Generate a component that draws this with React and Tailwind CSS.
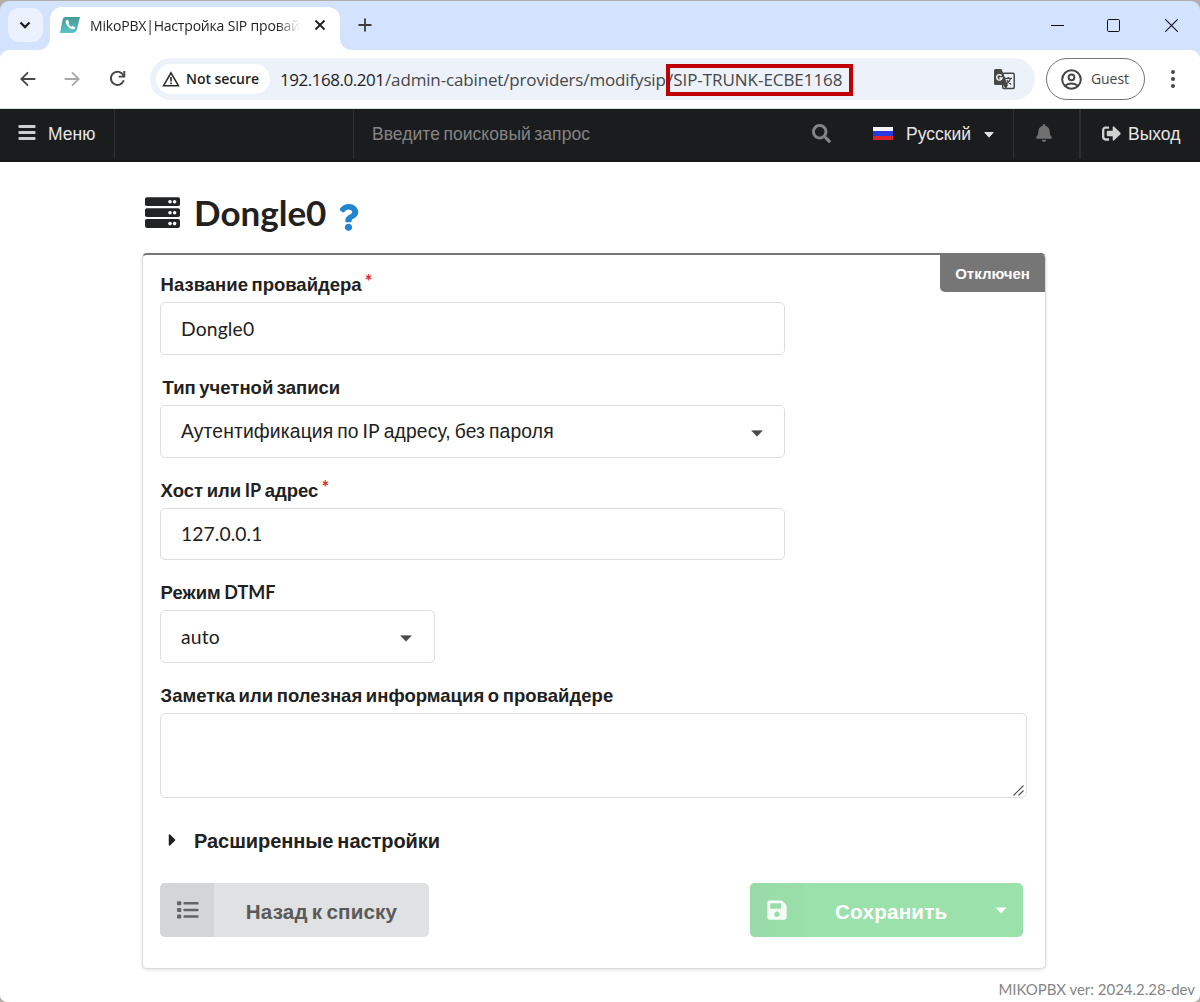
import React from 'react';
import { FaSearch, FaBell, FaSignOutAlt, FaQuestion, FaSave, FaCaretRight } from 'react-icons/fa';

function TabCurve({ flip }) {
  return (
    <svg width="12" height="12" viewBox="0 0 12 12" className={flip ? 'self-end -scale-x-100' : 'self-end'}>
      <path d="M12 0v12H0C7 12 12 7 12 0Z" fill="#fff" />
    </svg>
  );
}

function TabStrip() {
  return (
    <div className="flex h-[50px] flex-col bg-[#b3aeac]">
      <div className="h-px" />
      <div className="flex h-[49px] rounded-t-[9px] bg-[#d3e3fd]">
        <div className="mt-[7px] ml-2 flex h-[34px] w-[35px] items-center justify-center rounded-[11px] bg-[#ebf1fe]">
          <svg width="12" height="8" viewBox="0 0 12 8" className="mr-px" fill="none" stroke="#1f1f1f" strokeWidth="2.3">
            <path d="M1.500 1.500 6 6l4.500-4.500" />
          </svg>
        </div>
        <div className="ml-[-5px] flex">
          <TabCurve />
          <div className="mt-1.5 flex h-[43px] w-[290px] items-start rounded-t-xl bg-white pl-2.5">
            <svg width="20" height="16" viewBox="0 0 20 16" className="mt-[10px]">
              <defs>
                <linearGradient id="brand" x1="0" y1="0" x2="0" y2="1">
                  <stop offset="0" stopColor="#459a93" />
                  <stop offset="1" stopColor="#5cc3c6" />
                </linearGradient>
              </defs>
              <path d="M5.500 0H20l-2.800 11.500Q16 16 12 16H0L2.500 3Q3.200 0 5.500 0Z" fill="url(#brand)" />
              <path d="M6.300 3.200c-.9.900-.9 2.200 0 3.700 1.500 2.700 3.700 4.800 6.200 5.400 1 .2 1.900-.1 2.500-1 .3-.5.100-1-.4-1.300l-1.400-.8c-.5-.3-.9-.2-1.300.1l-.6.600C9.900 9.100 9 8 8.400 6.900l.4-.7c.3-.5.300-.8.100-1.300L8.300 3.500c-.4-.9-1.300-1-2-.3Z" fill="#fff" />
            </svg>
            <div className="mt-[7px] ml-2.5 h-6 w-[212px] font-['Open_Sans',sans-serif] text-[14px] leading-6 tracking-[-0.19px] whitespace-nowrap text-[#1f1f1f] [mask-image:linear-gradient(to_right,black_88%,transparent_99%)]">
              MikoPBX|Настройка SIP провай
            </div>
            <svg width="12" height="12" viewBox="0 0 12 12" className="mt-[12px] ml-3" stroke="#1f1f1f" strokeWidth="1.800">
              <path d="m1.500 1.500 9 9m0-9-9 9" />
            </svg>
          </div>
          <TabCurve flip />
        </div>
        <svg width="14" height="14" viewBox="0 0 14 14" className="mt-[17px] ml-[6px]" stroke="#3c3c3c" strokeWidth="1.800">
          <path d="M7 .5v13M.5 7h13" />
        </svg>
        <div className="mt-[18px] mr-[22px] ml-auto flex gap-[43px]">
          <svg width="13" height="13" viewBox="0 0 13 13" stroke="#111">
            <path d="M0 6.500h13" />
          </svg>
          <svg width="13" height="13" viewBox="0 0 13 13" stroke="#111" fill="none">
            <rect x=".5" y=".5" width="12" height="12" rx="1.200" />
          </svg>
          <svg width="13" height="13" viewBox="0 0 13 13" className="ml-0.5" stroke="#111" strokeWidth="1.100">
            <path d="m.3.3 12.400 12.400M12.700.3.300 12.700" />
          </svg>
        </div>
      </div>
    </div>
  );
}

function Arrow({ className }) {
  return (
    <svg width="16" height="16" viewBox="0 0 16 16" className={className} fill="none" stroke="currentColor" strokeWidth="1.800">
      <path d="M15.300 8H2M8 1.300 1.300 8 8 14.700" />
    </svg>
  );
}

function Toolbar() {
  return (
    <div className="h-[59px] bg-[#d3e3fd]">
      <div className="flex h-[59px] items-start rounded-t-[9px] border-b border-[#d5e2d8] bg-white pt-2 font-['Open_Sans',sans-serif]">
        <div className="flex h-[41px] items-center">
          <Arrow className="ml-5 text-[#474747]" />
          <Arrow className="ml-[28px] rotate-180 text-[#a8a8a8]" />
          <svg width="17" height="17" viewBox="0 0 17 17" className="ml-[29px]" fill="none" stroke="#474747" strokeWidth="1.900">
            <path d="M14.800 10.300A6.600 6.600 0 1 1 14.600 5.800" />
            <path d="M15.300 1v5.600H9.700" />
          </svg>
        </div>
        <div className="ml-[24px] flex h-[42px] w-[885px] items-center rounded-full bg-[#ecf1fa] pl-[6px]">
          <div className="flex h-[30px] w-[114px] items-center rounded-full bg-white pl-[6px]">
            <svg width="18" height="16" viewBox="0 0 18 16" fill="none" stroke="#2b2b2b" strokeWidth="1.600">
              <path d="M9 1.800 16.400 14.700H1.600Z" />
              <path d="M9 6v4.500M9 11.500v1.700" />
            </svg>
            <span className="mb-0.5 ml-[6px] text-[14px] font-semibold tracking-[-0.06px] whitespace-nowrap text-[#1f1f1f]">Not secure</span>
          </div>
          <div className="mt-px ml-[10px] flex text-[17px] leading-6 whitespace-nowrap text-[#474747]">
            <span className="w-[105px] tracking-[-0.47px] text-[#1f1f1f]">192.168.0.201</span>
            <span className="w-[282px] tracking-[-0.15px]">/admin-cabinet/providers/modifysip</span>
            <span className="relative tracking-[-0.05px]">
              /SIP-TRUNK-ECBE1168
              <span className="absolute -top-[4px] -left-[1px] h-8 w-[187px] border-4 border-[#c00000]" />
            </span>
          </div>
          <svg width="21" height="21" viewBox="0 0 21 21" className="mr-[20px] ml-auto">
            <rect x="8.700" y="4.200" width="11.500" height="15.300" rx="1.200" fill="#ecf1fa" stroke="#474747" strokeWidth="1.500" />
            <path d="M1.500 0h6l6.200 16H1.500Q0 16 0 14.500v-13Q0 0 1.500 0Z" fill="#474747" />
            <path d="m9 16 3 4 2-4Z" fill="#474747" />
            <path d="M7.500 6.700A2.700 2.700 0 1 0 8 9H5.300" fill="none" stroke="#fff" strokeWidth="1.400" />
            <path d="M11 9.300h7M14.200 8v1.300M16.700 9.300Q15.500 13 12.300 15M13 11q1.600 3 4.200 4.500" fill="none" stroke="#474747" strokeWidth="1.300" />
          </svg>
        </div>
        <div className="ml-[11px] flex h-[42px] w-[99px] items-center rounded-full border border-[#747775] pl-[14px]">
          <svg width="21" height="21" viewBox="0 0 21 21" fill="none" stroke="#474747" strokeWidth="2">
            <circle cx="10.500" cy="10.500" r="9.300" />
            <circle cx="10.500" cy="8.300" r="2.900" />
            <path d="M4 16.700q6.500-4.500 13 0" />
          </svg>
          <span className="mb-0.5 ml-[9px] text-[14px] tracking-[-0.07px] text-[#474747]">Guest</span>
        </div>
        <div className="ml-[26px] flex h-[41px] flex-col justify-center gap-[3px]">
          <div className="size-[4px] rounded-full bg-[#474747]" />
          <div className="size-[4px] rounded-full bg-[#474747]" />
          <div className="size-[4px] rounded-full bg-[#474747]" />
        </div>
      </div>
    </div>
  );
}

function MenuBar() {
  return (
    <nav className="flex h-[53px] items-start border-b-2 border-[#151617] bg-[#1b1c1d] font-['Liberation_Sans',sans-serif] text-[17.500px] text-[#e6e6e6]">
      <div className="flex h-[50px] w-[115px] items-center border-r border-[#2f3031] pl-[18px]">
        <svg width="18" height="15" viewBox="0 0 18 15" className="mb-[3px]" fill="#cfcfcf">
          <rect width="17" height="3" x=".5" rx=".8" />
          <rect width="17" height="3" x=".5" y="6" rx=".8" />
          <rect width="17" height="3" x=".5" y="12" rx=".8" />
        </svg>
        <span className="ml-[12px]">Меню</span>
      </div>
      <div className="h-[50px] w-[239px] border-r border-[#2f3031]" />
      <div className="flex h-[50px] w-[660px] items-center border-r border-[#2f3031] pl-[18px]">
        <span className="tracking-[0.05px] text-[#858585] [word-spacing:-1.500px]">Введите поисковый запрос</span>
        <FaSearch className="mb-0.5 ml-auto size-[19px] text-[#848484]" />
        <div className="mb-px ml-[42px] flex h-[13px] w-5 flex-col">
          <div className="h-[4px] bg-[#f4f4f8]" />
          <div className="h-[5px] bg-[#2a38e0]" />
          <div className="h-[4px] bg-[#e0232b]" />
        </div>
        <span className="ml-[13px] w-[66px]">Русский</span>
        <svg width="10" height="6" viewBox="0 0 10 6" className="mt-0.5 mr-[19px] ml-[12px]">
          <path d="M.8.500h8.400L5 5.200Z" fill="#e0e0e0" stroke="#e0e0e0" strokeLinejoin="round" />
        </svg>
      </div>
      <div className="flex h-[50px] w-[67px] items-center justify-center border-r-2 border-[#2b2c2d] pr-1">
        <FaBell className="mr-px mb-0.5 size-[18px] text-[#707070]" />
      </div>
      <div className="flex h-[50px] items-center pl-[21px]">
        <FaSignOutAlt className="mb-0.5 size-[19px] text-[#d0d0d0]" />
        <span className="ml-[7px]">Выход</span>
      </div>
    </nav>
  );
}

function ServerIcon() {
  return (
    <svg width="36" height="32" viewBox="0 0 36 32" fill="#222324">
      {[0.3, 11.2, 22.1].map((y) => (
        <g key={y}>
          <rect y={y} width="35" height="8.800" rx="1.800" />
          <circle cx="25" cy={y + 4.5} r="1.800" fill="#fff" />
          <circle cx="29.600" cy={y + 4.5} r="1.800" fill="#fff" />
        </g>
      ))}
    </svg>
  );
}

function Label({ children, required, className = '' }) {
  return (
    <div className={`flex h-6 items-center pt-0.5 pl-[0.600px] text-[18.500px] font-bold whitespace-nowrap text-[#212121] ${className}`}>
      <span className="whitespace-pre [word-spacing:-1.600px]">{children}</span>
      {required && <span className="mb-[11px] ml-[3px] h-6 font-['Lato',sans-serif] text-[18px] font-bold text-[#db2828]">*</span>}
    </div>
  );
}

function Field({ children, className = '' }) {
  return (
    <div className={`flex items-center rounded-[5px] border border-[#dededf] bg-white pl-5 text-[19.300px] text-[#212121] ${className}`}>
      {children}
    </div>
  );
}

function Caret({ className }) {
  return (
    <svg width="12" height="7" viewBox="0 0 12 7" className={className}>
      <path d="M.7.700h10.600L6 6.300Z" fill="#4a4a4a" stroke="#4a4a4a" strokeWidth=".6" strokeLinejoin="round" />
    </svg>
  );
}

function ListIcon() {
  return (
    <svg width="22" height="18" viewBox="0 0 22 18" className="ml-px" fill="#646464">
      {[0.3, 7, 13.6].map((y) => (
        <g key={y}>
          <rect y={y} width="4.300" height="4" rx="1" />
          <rect x="6.500" y={y + 0.7} width="15" height="2.500" rx=".6" />
        </g>
      ))}
    </svg>
  );
}

function ProviderForm() {
  return (
    <section className="mt-[17px] ml-[142px] flex h-[716px] w-[904px] flex-col rounded-[5px] border border-t-2 border-[#dcdcdd] border-t-[#767676] bg-white pl-[17px] shadow-[0_1px_3px_0_rgba(34,36,38,0.15)]">
      <div className="flex h-[47px] justify-between">
        <Label required className="mt-[17px]">Название провайдера</Label>
        <div className="flex h-[37px] w-[105px] items-center justify-center rounded-tr-[3px] rounded-bl-[5px] bg-[#767676] pt-0.5 text-[15px] font-bold text-white">
          Отключен
        </div>
      </div>
      <Field className="h-[53px] w-[625px]">
        <span className="mt-0.5 font-['Lato',sans-serif] tracking-[0.15px]">Dongle0</span>
      </Field>

      <Label className="mt-[20px]"><span className="ml-0.5">Тип учетной записи</span></Label>
      <Field className="mt-[6px] h-[53px] w-[625px]">
        <span className="tracking-[0.14px] whitespace-pre [word-spacing:-1.600px]">
          Аутентификация по <span className="font-['Lato',sans-serif]">IP</span> адресу, без пароля
        </span>
        <Caret className="mt-1 mr-[21px] ml-auto" />
      </Field>

      <Label required className="mt-[20px]">
        Хост или <span className="font-['Lato',sans-serif] text-[18px]">IP</span> адрес
      </Label>
      <Field className="mt-[6px] h-[52px] w-[625px]">
        <span className="font-['Lato',sans-serif] tracking-[0.08px]">127.0.0.1</span>
      </Field>

      <Label className="mt-[20px]">
        Режим <span className="font-['Lato',sans-serif] text-[18px]">DTMF</span>
      </Label>
      <Field className="mt-[6px] h-[53px] w-[275px]">
        <span className="mt-0.5 font-['Lato',sans-serif] tracking-[0.15px]">auto</span>
        <Caret className="mt-1 mr-[22px] ml-auto" />
      </Field>

      <Label className="mt-[20px] tracking-[0.030px]">Заметка или полезная информация о провайдере</Label>
      <div className="mt-[6px] flex h-[85px] w-[867px] items-end justify-end rounded-[5px] border border-[#dededf] pr-[2px] pb-[1px]">
        <svg width="11" height="11" viewBox="0 0 11 11" stroke="#555" strokeWidth="1.200">
          <path d="M.5 10.500 10.500.500M5.500 10.500l5-5" />
        </svg>
      </div>

      <div className="mt-[31px] flex h-6 items-center text-[#212121]">
        <FaCaretRight className="mb-0.5 ml-[5px] h-[20px] w-[15px]" />
        <span className="ml-[14px] text-[20px] font-bold tracking-[-0.050px] [word-spacing:-1.600px]">Расширенные настройки</span>
      </div>

      <div className="mt-[30px] mr-[22px] flex h-[54px] justify-between text-[20.600px] font-bold">
        <div className="flex w-[269px] overflow-hidden rounded-[5px] bg-[#e0e1e2] text-[#5a5a5a]">
          <div className="flex w-[54px] items-center justify-center bg-[#d4d5d6]">
            <ListIcon />
          </div>
          <span className="mt-1 flex-1 self-center text-center tracking-[0.15px] [word-spacing:-1.700px]">Назад к списку</span>
        </div>
        <div className="flex w-[273px] overflow-hidden rounded-[5px] bg-[#9be1ab] text-white">
          <div className="flex w-[54px] items-center justify-center bg-linear-to-r from-[#98dba8] to-[#9adfaa]">
            <FaSave className="h-[22px] w-5 text-[#f5fbf6]" />
          </div>
          <span className="mt-1 ml-[31px] self-center tracking-[0.25px]">Сохранить</span>
          <svg width="12" height="7" viewBox="0 0 12 7" className="mr-[16px] ml-auto self-center">
            <path d="M.5.500h11L6 6.500Z" fill="#fff" />
          </svg>
        </div>
      </div>
    </section>
  );
}

export default function App() {
  return (
    <div className="h-[1002px] w-[1200px] bg-[#b3aeac]">
      <div className="flex h-[1002px] flex-col overflow-hidden rounded-b-[7px] bg-white font-['Liberation_Sans',sans-serif]">
        <TabStrip />
        <Toolbar />
        <MenuBar />
        <main className="flex-1">
          <header className="flex h-[74px] items-start pt-[35px] pl-[145px]">
            <ServerIcon />
            <h1 className="-mt-[6px] ml-[13px] font-['Lato',sans-serif] text-[35px] leading-[42px] font-bold tracking-[0px] text-[#212121]">Dongle0</h1>
            <FaQuestion className="mt-[7px] ml-[9px] size-[27px] text-[#2185d0]" />
          </header>
          <ProviderForm />
          <footer className="mt-[9px] mr-[5px] text-right font-['Lato',sans-serif] text-[15px] leading-[22px] tracking-[-0.020px] text-[#858585]">MIKOPBX ver: 2024.2.28-dev</footer>
        </main>
      </div>
    </div>
  );
}
